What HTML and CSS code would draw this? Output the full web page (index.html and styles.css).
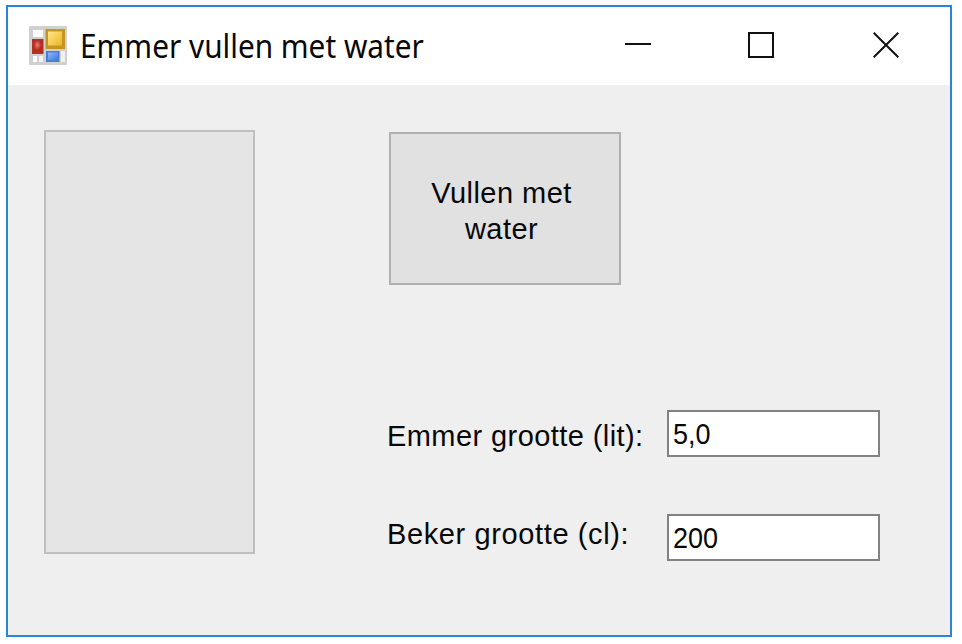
FILE: index.html
```html
<!DOCTYPE html>
<html lang="nl">
<head>
<meta charset="utf-8">
<title>Emmer vullen met water</title>
<link rel="stylesheet" href="styles.css">
</head>
<body>
<main class="window">
  <header class="titlebar">
    <svg class="app-icon" width="38" height="39" viewBox="0 0 38 39">
      <defs>
        <linearGradient id="gold" x1="0" y1="0" x2="1" y2="1"><stop offset="0" stop-color="#ffe88e"/><stop offset="1" stop-color="#efb320"/></linearGradient>
        <linearGradient id="blue" x1="0" y1="0" x2="1" y2="1"><stop offset="0" stop-color="#8fb9fa"/><stop offset="1" stop-color="#3f78dc"/></linearGradient>
        <radialGradient id="red" cx=".45" cy=".4"><stop offset="0" stop-color="#e58478"/><stop offset="1" stop-color="#bb2820"/></radialGradient>
      </defs>
      <rect width="38" height="39" rx="1" fill="#d0d0d0"/>
      <rect x="4" y="4" width="10" height="7" fill="#fff"/>
      <rect x="4" y="30" width="4" height="6" fill="#fff"/>
      <rect x="10" y="30" width="4" height="6" fill="#f4f4f4"/>
      <rect x="32" y="25" width="4" height="11" fill="#f0f0f0"/>
      <rect x="3" y="13" width="11.500" height="15" fill="#b0302a"/>
      <rect x="5" y="15" width="7.500" height="10" fill="url(#red)"/>
      <rect x="16.500" y="3" width="19.500" height="20" fill="#c59522"/>
      <rect x="19" y="5.500" width="14" height="14" fill="url(#gold)"/>
      <rect x="17" y="25" width="13.500" height="11" fill="#4a7dd4"/>
      <rect x="19" y="26.500" width="10" height="7.500" fill="url(#blue)"/>
    </svg>
    <h1 class="title">Emmer vullen met water</h1>
    <div class="controls">
      <svg width="26" height="26" viewBox="0 0 26 26"><path d="M0 12h26" stroke="#111" stroke-width="2"/></svg>
      <svg class="maximize" width="26" height="26" viewBox="0 0 26 26"><rect x="1" y="1" width="24" height="24" fill="none" stroke="#111" stroke-width="2"/></svg>
      <svg width="26" height="26" viewBox="0 0 26 26"><path d="M.7.7l24.6 24.6M25.300.7L.7 25.300" stroke="#111" stroke-width="2"/></svg>
    </div>
  </header>
  <section class="client">
    <div class="bucket"></div>
    <div class="form">
      <button class="fill"><span>Vullen met<br>water</span></button>
      <div class="row first"><label for="emmer"><span class="emmer">Emmer grootte (lit):</span></label><div class="field" id="emmer"><span>5,0</span></div></div>
      <div class="row"><label for="beker"><span class="beker">Beker grootte (cl):</span></label><div class="field" id="beker"><span>200</span></div></div>
    </div>
  </section>
</main>
</body>
</html>
```
FILE: styles.css
```css
* { box-sizing: border-box; }
body { margin: 0; background: #fff; font-family: "Liberation Sans", sans-serif; color: #080808; }
.window { width: 946px; height: 632px; margin: 5px 0 0 6px; border: 2px solid #2a86d3; background: #efefef; }
.titlebar { height: 78px; background: #fff; display: flex; align-items: flex-start; padding: 19px 51px 0 21px; }
.app-icon { flex: none; }
.title { margin: -3px 0 0 13px; font: 400 32px/46px "Noto Sans", sans-serif; white-space: nowrap; transform: scaleX(.93); transform-origin: 0 50%; }
.controls { margin-left: auto; display: flex; gap: 98px; padding-top: 6px; }
.controls svg { display: block; flex: none; }
.controls .maximize { margin: 0 1px 0 -1px; }
.client { height: 550px; display: flex; }
.bucket { width: 211px; height: 424px; margin: 45px 0 0 36px; border: 2px solid #bfbfbf; background: #e5e5e5; }
.form { margin: 47px 0 0 132px; }
.fill { display: block; width: 232px; height: 153px; margin-left: 2px; padding: 4px 7px 0 0; border: 2px solid #b0b0b0; background: #e1e1e1; font: 29px/36px "Liberation Sans", sans-serif; letter-spacing: .45px; color: inherit; }
.fill span { display: inline-block; }
.row { display: flex; align-items: center; height: 47px; margin-top: 57px; }
.row.first { margin-top: 125px; }
label { width: 280px; font-size: 29px; line-height: 36px; white-space: nowrap; }
label span { display: block; }
.emmer { padding-top: 4px; letter-spacing: .42px; }
.beker { padding-bottom: 8px; letter-spacing: .62px; }
.field { width: 213px; height: 47px; border: 2px solid #828282; background: #fff; padding-left: 4px; font-size: 30px; line-height: 44px; }
.field span { display: inline-block; transform: scaleX(.9); transform-origin: 0 50%; }
```
